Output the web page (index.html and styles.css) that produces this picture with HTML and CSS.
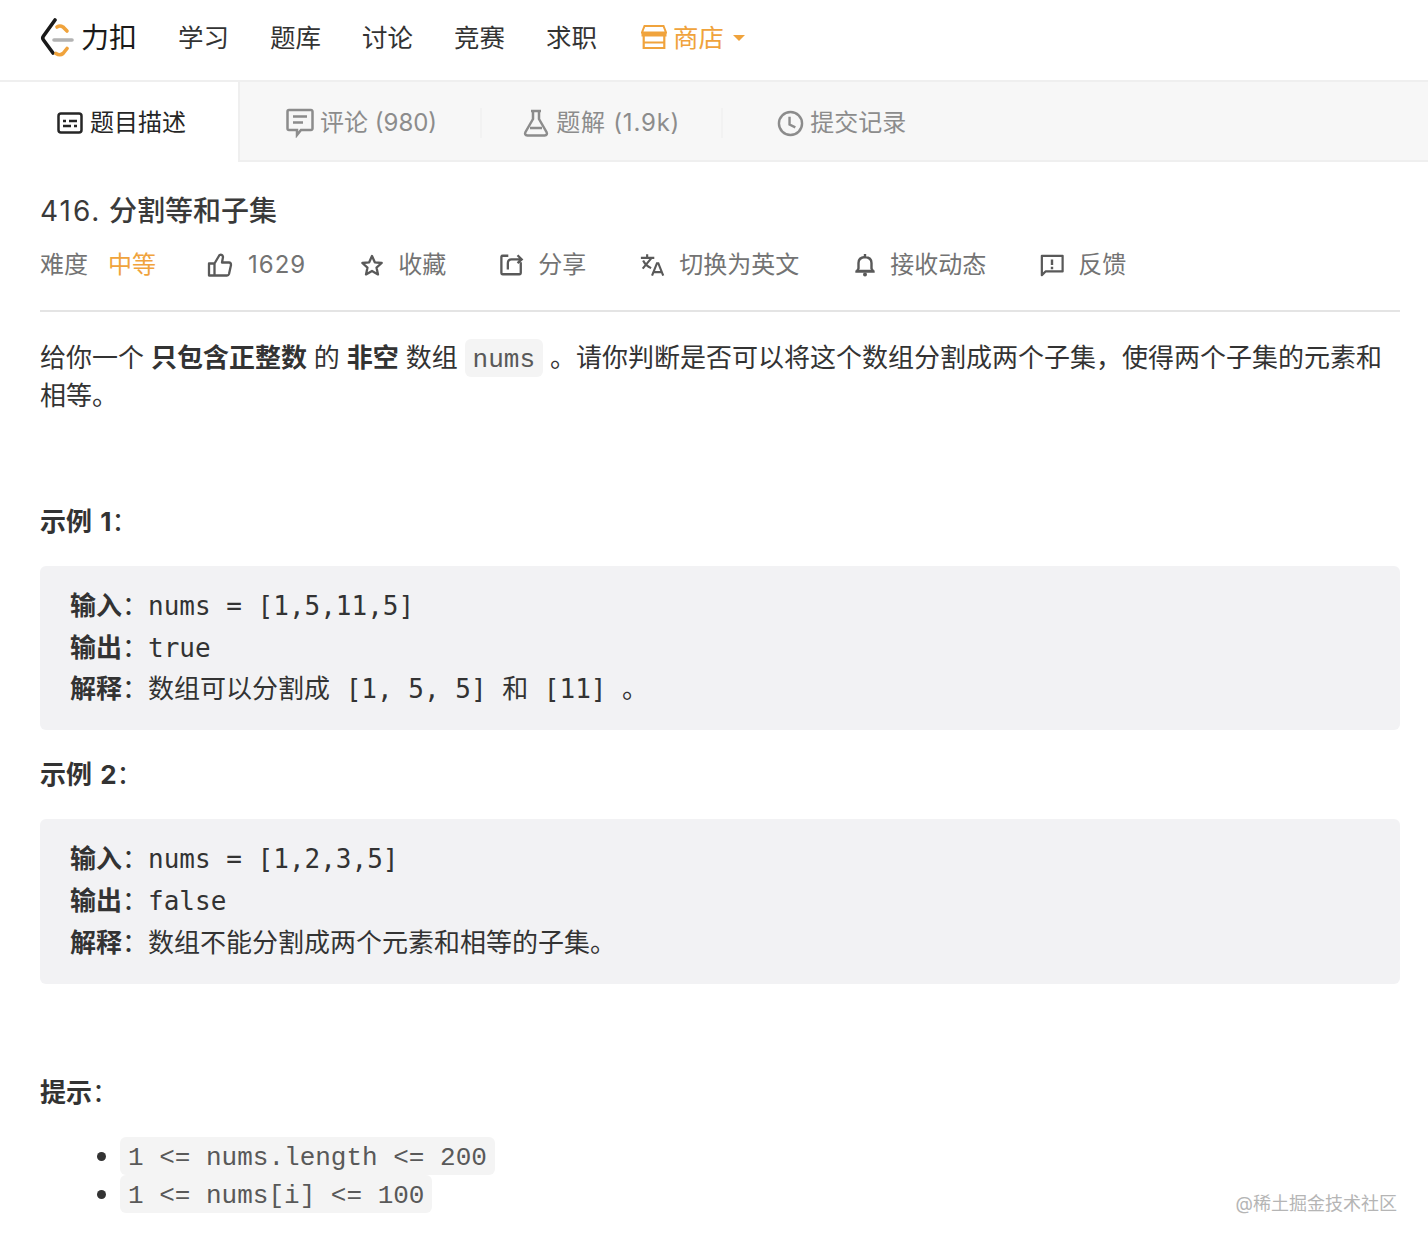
FILE: index.html
```html
<!DOCTYPE html>
<html lang="zh">
<head>
<meta charset="utf-8">
<title>416. 分割等和子集</title>
<link rel="stylesheet" href="styles.css">
</head>
<body>
<header class="topbar">
  <div class="brand">
    <svg class="logo" viewBox="0 0 34 40" width="34" height="40"><path d="M15 2 3.500 18q-1.500 2 0 4L13 35" fill="none" stroke="#1a1a1a" stroke-width="3.600" stroke-linecap="round"/><path d="M17 9q3-2 6 0l4 4" fill="none" stroke="#f0a33c" stroke-width="3.600" stroke-linecap="round"/><path d="M16 35.500q4 2.500 7 0l4-5" fill="none" stroke="#f0a33c" stroke-width="3.600" stroke-linecap="round"/><path d="M14 22h18" stroke="#b3b3b3" stroke-width="3.600" stroke-linecap="round"/></svg>
    <span class="brand-name">力扣</span>
  </div>
  <nav class="nav">
    <a>学习</a><a>题库</a><a>讨论</a><a>竞赛</a><a>求职</a>
    <a class="shop"><svg viewBox="0 0 26 25" width="26" height="25"><path d="M3.500 2h19l2.500 6.500H1z" fill="none" stroke="#f0a33c" stroke-width="2"/><path d="M.5 8h25v4.500H.5z" fill="#f0a33c"/><path d="M2.700 12v12h20.600V12M2.700 18.500h20.600" fill="none" stroke="#f0a33c" stroke-width="2.200"/></svg>商店<i class="caret"></i></a>
  </nav>
</header>
<div class="tabs">
  <div class="tab active"><svg viewBox="0 0 26 22" width="26" height="22"><rect x="1.500" y="1.500" width="23" height="19" rx="2.500" fill="none" stroke="#262626" stroke-width="2.500"/><path d="M6 9h3M12 9h8M6 14h8M17 14h3" stroke="#262626" stroke-width="2.500"/></svg>题目描述</div>
  <div class="tab first"><svg viewBox="0 0 28 30" width="28" height="30"><path d="M3 2h22a1.500 1.500 0 0 1 1.500 1.500v17A1.500 1.500 0 0 1 25 22H15l-4 5v-5H3a1.500 1.500 0 0 1-1.500-1.500v-17A1.500 1.500 0 0 1 3 2z" fill="none" stroke="#8c8c8c" stroke-width="2.500"/><path d="M7 8.500h14M7 14.500h10" stroke="#8c8c8c" stroke-width="2.500"/></svg>评论 (980)</div>
  <div class="tab second"><svg viewBox="0 0 26 28" width="26" height="28"><path d="M8 2h10M10 2v8L2.500 23q-1.500 3 2 3.500h17q3.500-.5 2-3.500L16 10V2M7 19h12" fill="none" stroke="#8c8c8c" stroke-width="2.500"/></svg><span class="wide">题解 (1.9k)</span></div>
  <div class="tab last"><svg viewBox="0 0 28 28" width="27" height="27"><circle cx="14" cy="14" r="12" fill="none" stroke="#8c8c8c" stroke-width="2.500"/><path d="M13 7v8l6 3" fill="none" stroke="#8c8c8c" stroke-width="2.500"/></svg>提交记录</div>
</div>
<main class="content">
  <h1 class="title"><span class="num">416.</span> 分割等和子集</h1>
  <div class="meta">
    <div class="meta-item difficulty">难度<span class="medium">中等</span></div>
    <div class="meta-item likes"><svg viewBox="0 0 26 24" width="26" height="24"><path d="M7.500 10.500v12M2 10.500h5.500l5-8.500q3-1 3.500 2l-1 5.500h7q2 0 2 2.500l-2 9q-.5 1.500-2 1.500H2z" fill="none" stroke="#595959" stroke-width="2.300" stroke-linejoin="round"/></svg><span class="count">1629</span></div>
    <div class="meta-item"><svg viewBox="0 0 24 24" width="24" height="24"><path d="M12 3l2.800 6.300 6.900.7-5.200 4.600 1.500 6.800-6-3.500-6 3.500 1.500-6.800L2.300 10l6.900-.7z" fill="none" stroke="#595959" stroke-width="2.300" stroke-linejoin="round"/></svg><span>收藏</span></div>
    <div class="meta-item"><svg viewBox="0 0 26 24" width="24" height="24"><path d="M9 2H3a1.500 1.500 0 0 0-1.500 1.500v17A1.500 1.500 0 0 0 3 22h18a1.500 1.500 0 0 0 1.500-1.500V9M8.500 17v-7q0-4 4-4h11M19 1.500 23.500 6 19 10" fill="none" stroke="#595959" stroke-width="2.500"/></svg><span>分享</span></div>
    <div class="meta-item"><svg viewBox="0 0 28 26" width="25" height="24"><path d="M1 5h15M8 1v4M3 17l10-12M3.500 8q3 6 9 8.500M13.500 25l5.500-14h1.500l5.500 14M15.500 21h9" fill="none" stroke="#595959" stroke-width="2.400"/></svg><span>切换为英文</span></div>
    <div class="meta-item bell"><svg viewBox="0 0 22 24" width="22" height="24"><path d="M3 18h16l-1.500-2.500V10q0-5.500-6.500-6-6.500.5-6.500 6v5.500zM1.500 18.500h19M11 1v3" fill="none" stroke="#595959" stroke-width="2.400"/><circle cx="11" cy="21.500" r="2" fill="#595959"/></svg><span>接收动态</span></div>
    <div class="meta-item"><svg viewBox="0 0 26 24" width="24" height="24"><path d="M2 2h22.500v17H6l-4 4z" fill="none" stroke="#595959" stroke-width="2.400" stroke-linejoin="round"/><path d="M13 6v6M13 14v2.500" stroke="#595959" stroke-width="2.600"/></svg><span>反馈</span></div>
  </div>
  <article class="desc">
    <p class="intro">给你一个 <strong>只包含正整数</strong> 的 <strong>非空</strong> 数组 <code>nums</code> 。请你判断是否可以将这个数组分割成两个子集，使得两个子集的元素和相等。</p>
    <p class="example-title first-example"><strong>示例 1</strong>：</p>
<pre><strong>输入</strong>：nums = [1,5,11,5]
<strong>输出</strong>：true
<strong>解释</strong>：数组可以分割成 [1, 5, 5] 和 [11] 。</pre>
    <p class="example-title"><strong>示例 2</strong>：</p>
<pre><strong>输入</strong>：nums = [1,2,3,5]
<strong>输出</strong>：false
<strong>解释</strong>：数组不能分割成两个元素和相等的子集。</pre>
    <p class="hint-title"><strong>提示</strong>：</p>
    <ul class="hints">
      <li><code>1 &lt;= nums.length &lt;= 200</code></li>
      <li><code>1 &lt;= nums[i] &lt;= 100</code></li>
    </ul>
  </article>
</main>
<div class="watermark">@稀土掘金技术社区</div>
</body>
</html>
```

FILE: styles.css
```css
* { box-sizing: border-box; }
html, body { margin: 0; padding: 0; }
body {
  width: 1428px;
  height: 1246px;
  overflow: hidden;
  position: relative;
  background: #fff;
  color: #262626;
  font-family: Inter, "Noto Sans CJK SC", sans-serif;
  font-size: 26px;
}
svg { display: block; flex: none; }
.topbar {
  height: 82px;
  display: flex;
  align-items: center;
  padding: 0 0 4px 40px;
  border-bottom: 2px solid #efefef;
}
.brand { display: flex; align-items: center; gap: 7px; width: 138px; }
.brand-name { font-size: 28px; line-height: 34px; color: #1a1a1a; }
.nav { display: flex; align-items: center; gap: 41px; color: #333; font-size: 25.500px; line-height: 30px; }
.nav a { display: flex; align-items: center; }
.shop { color: #f0a33c; margin-left: 3px; }
.shop svg { margin: 0 6px 4px 0; }
.caret {
  margin-left: 9px;
  border: 6px solid transparent;
  border-top-color: #f0a33c;
  border-bottom-width: 0;
}
.tabs {
  height: 80px;
  display: flex;
  background: #f7f7f7;
  border-bottom: 2px solid #efefef;
  color: #8c8c8c;
  font-size: 24px;
  line-height: 30px;
}
.tab {
  display: flex;
  align-items: center;
  gap: 6px;
  height: 30px;
  margin-top: 26px;
  padding: 0 42px;
  border-right: 2px solid #f2f2f2;
}
.tab.active {
  width: 240px;
  height: 80px;
  margin-top: 0;
  padding: 2px 0 0 57px;
  gap: 7px;
  background: #fff;
  color: #262626;
  border-right: 2px solid #efefef;
}
.tab.first { padding-left: 46px; padding-right: 43px; }
.tab.second { padding-left: 41px; padding-right: 41px; gap: 7px; }
.wide { letter-spacing: .8px; }
.tab.last { border-right: 0; padding-left: 54px; gap: 6px; }
.content { padding: 0 28px 0 40px; }
.title {
  margin: 0;
  padding-top: 29px;
  font-size: 28px;
  line-height: 40px;
  font-weight: 500;
  color: #3a3a3a;
}
.num { font-weight: 400; letter-spacing: 2px; }
.meta {
  display: flex;
  align-items: center;
  gap: 54px;
  height: 38px;
  margin-top: 15px;
  color: #737373;
  font-size: 24px;
  line-height: 30px;
}
.meta-item { display: flex; align-items: center; gap: 14px; white-space: nowrap; }
.difficulty { gap: 20px; margin-right: -3px; }
.likes { gap: 15px; }
.bell { margin-left: 1px; }
.count { letter-spacing: 1px; }
.medium { color: #f0a33c; }
.desc { margin-top: 26px; border-top: 2px solid #e4e4e4; padding-top: 27px; color: #333; }
.desc p { margin: 0; line-height: 38px; }
.desc strong { font-weight: 700; }
.intro { word-spacing: -.4px; }
.example-title strong { word-spacing: 2px; }
.desc code {
  font-family: "Liberation Mono", monospace;
  font-size: 26px;
  line-height: 1;
  color: #595959;
  background: #f4f4f4;
  border-radius: 6px;
  padding: 6px 8px 2px;
  word-spacing: 0;
}
.first-example { padding-top: 88px; }
.desc pre {
  margin: 25px 0 26px;
  height: 164.400px;
  padding: 20px 30px;
  border-radius: 6px;
  background: #f2f2f4;
  font-family: "DejaVu Sans Mono", "Noto Sans CJK SC", monospace;
  font-size: 26px;
  line-height: 41.600px;
  color: #333;
}
.desc .hint-title { margin-top: 90px; }
.hints { margin: 25px 0 0; padding: 0 0 0 80px; list-style: none; }
.hints li { line-height: 38px; position: relative; }
.hints li::before {
  content: "";
  position: absolute;
  left: -23px;
  top: 15px;
  width: 9px;
  height: 9px;
  border-radius: 50%;
  background: #333;
}
.watermark {
  position: absolute;
  right: 31px;
  bottom: 31px;
  font-size: 18px;
  color: #b5b5b5;
}
```
